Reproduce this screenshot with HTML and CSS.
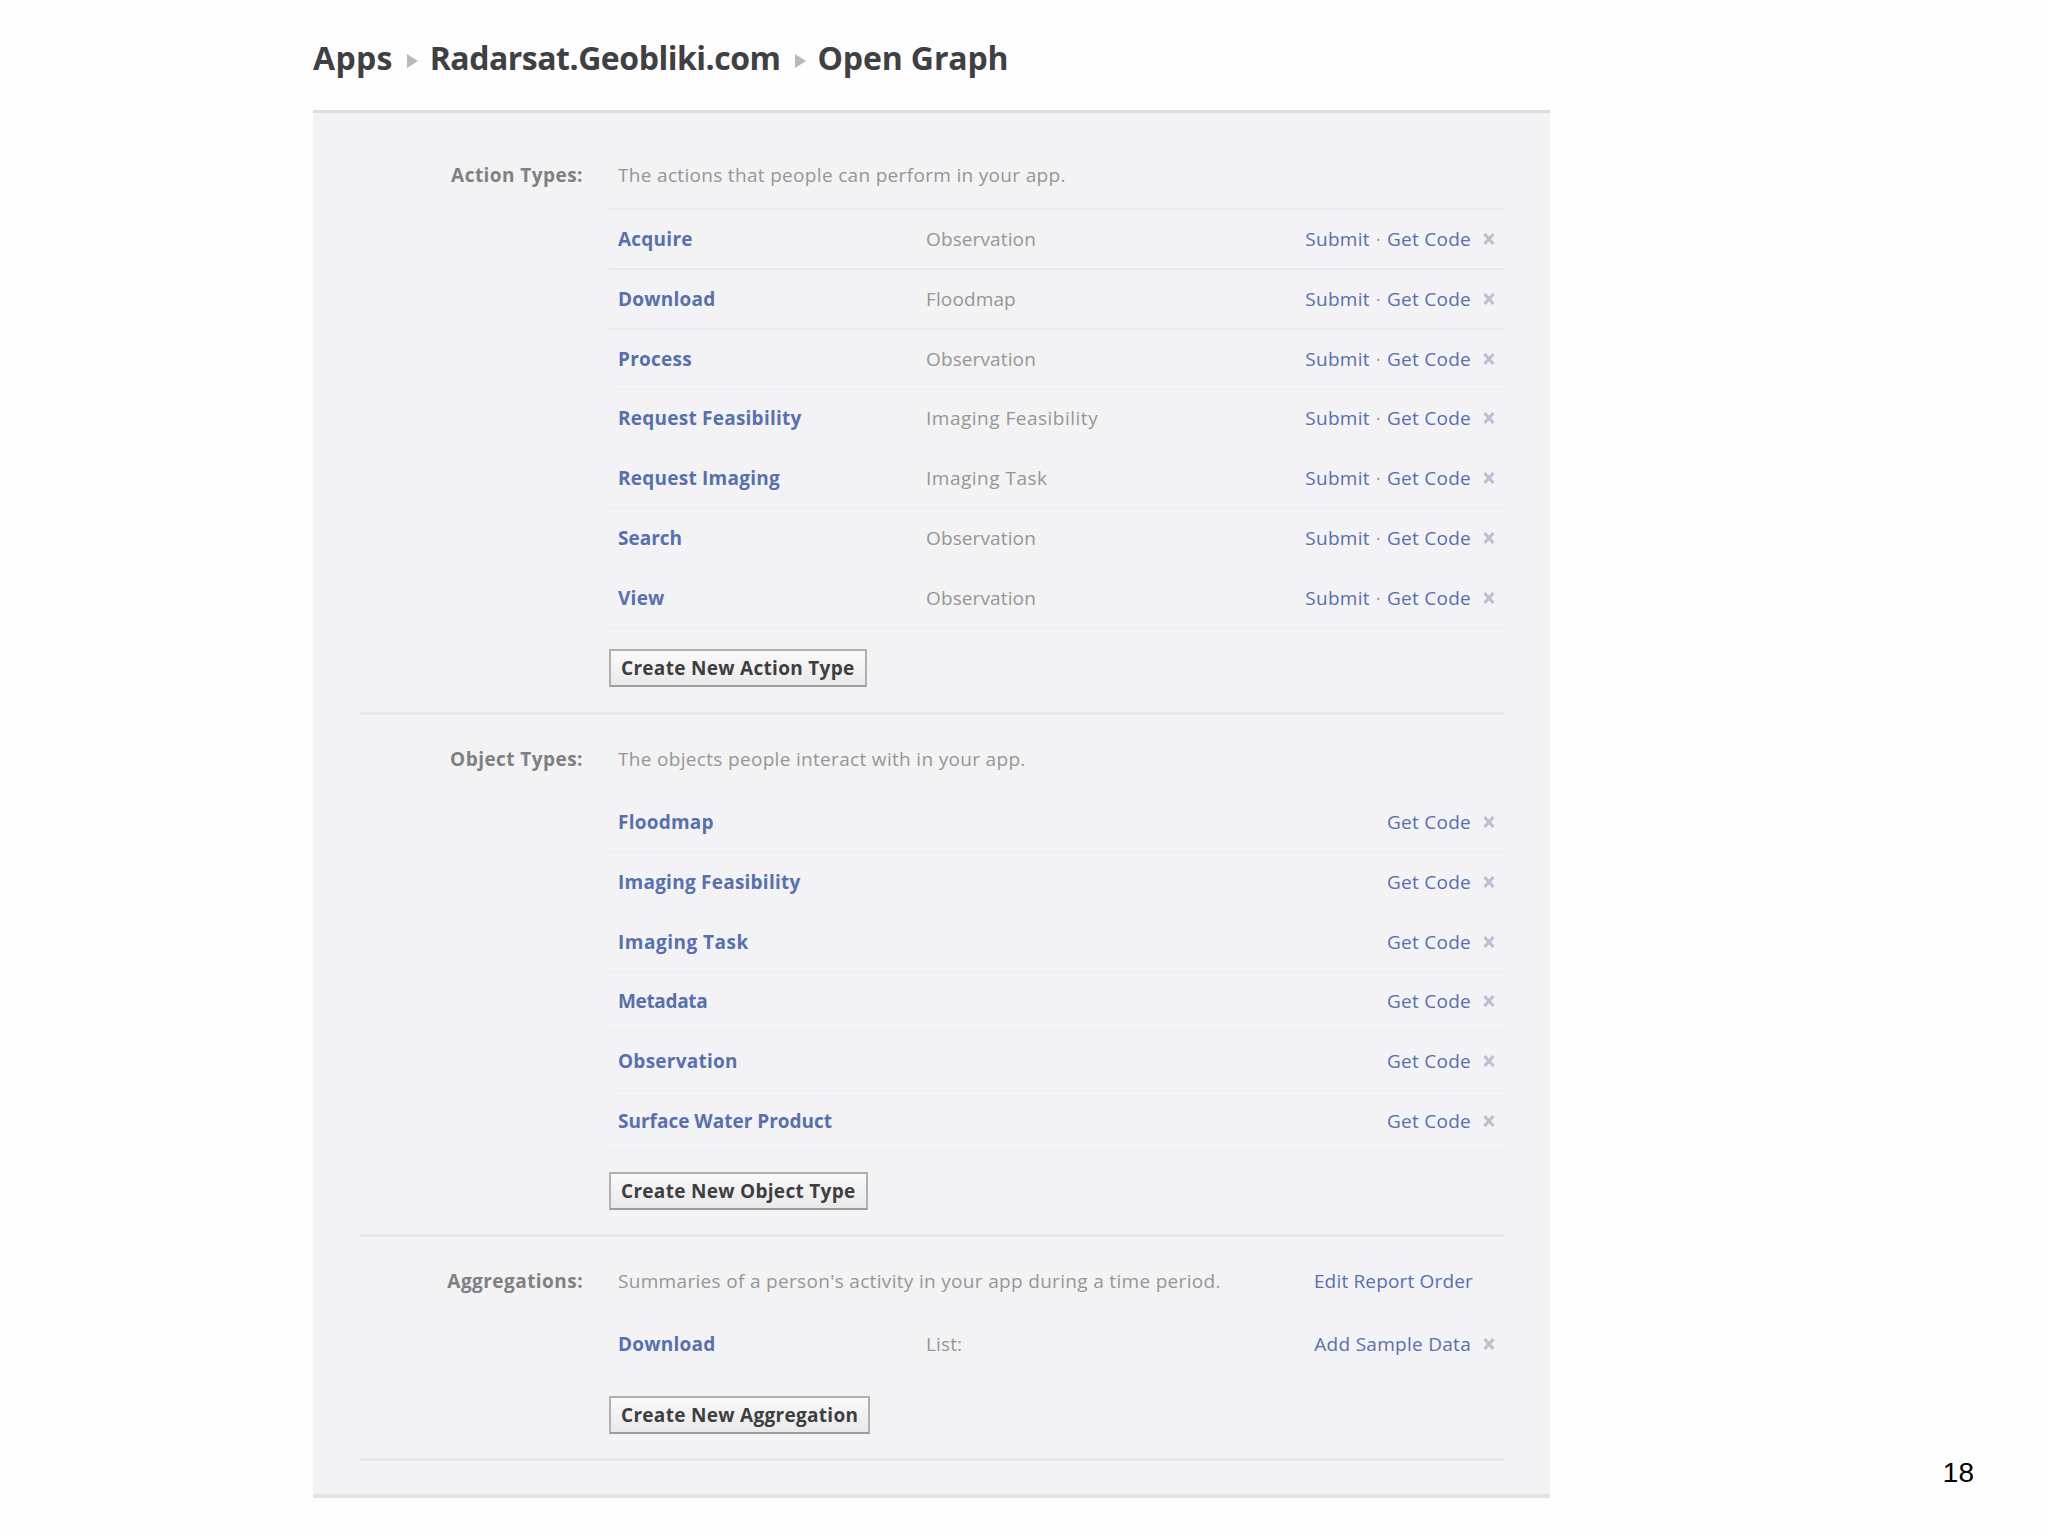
FILE: index.html
```html
<!DOCTYPE html>
<html lang="en">
<head>
  <meta charset="UTF-8" />
  <title>Open Graph</title>
  <link rel="stylesheet" href="styles.css">
</head>
<body>
  <svg class="defs" width="0" height="0">
    <symbol id="close" viewBox="0 0 12 12">
      <path d="M1.5 1 L10.5 11 M10.5 1 L1.5 11" />
    </symbol>
  </svg>

  <main>
    <h1 class="breadcrumb">
      <span class="crumb apps">Apps</span>
      <i class="arrow"></i>
      <span class="crumb site">Radarsat.Geobliki.com</span>
      <i class="arrow"></i>
      <span class="crumb page">Open Graph</span>
    </h1>

    <div class="panel">
      <section class="actions">
        <h2>Action Types:</h2>
        <div class="content">
          <div class="desc"><span>The actions that people can perform in your app.</span></div>
          <div class="row"><a class="name">Acquire</a><span class="object">Observation</span><span class="links"><a>Submit</a><b>·</b><a>Get Code</a></span><svg class="close"><use href="#close" /></svg></div>
          <div class="row"><a class="name">Download</a><span class="object">Floodmap</span><span class="links"><a>Submit</a><b>·</b><a>Get Code</a></span><svg class="close"><use href="#close" /></svg></div>
          <div class="row"><a class="name">Process</a><span class="object">Observation</span><span class="links"><a>Submit</a><b>·</b><a>Get Code</a></span><svg class="close"><use href="#close" /></svg></div>
          <div class="row faint"><a class="name">Request Feasibility</a><span class="object wide">Imaging Feasibility</span><span class="links"><a>Submit</a><b>·</b><a>Get Code</a></span><svg class="close"><use href="#close" /></svg></div>
          <div class="row faint"><a class="name">Request Imaging</a><span class="object wide">Imaging Task</span><span class="links"><a>Submit</a><b>·</b><a>Get Code</a></span><svg class="close"><use href="#close" /></svg></div>
          <div class="row faint"><a class="name normal">Search</a><span class="object">Observation</span><span class="links"><a>Submit</a><b>·</b><a>Get Code</a></span><svg class="close"><use href="#close" /></svg></div>
          <div class="row faint"><a class="name">View</a><span class="object">Observation</span><span class="links"><a>Submit</a><b>·</b><a>Get Code</a></span><svg class="close"><use href="#close" /></svg></div>
          <div class="create"><button>Create New Action Type</button></div>
        </div>
      </section>

      <section class="objects">
        <h2>Object Types:</h2>
        <div class="content">
          <div class="desc"><span>The objects people interact with in your app.</span></div>
          <div class="row faint"><a class="name">Floodmap</a><span class="links"><a>Get Code</a></span><svg class="close"><use href="#close" /></svg></div>
          <div class="row faint"><a class="name">Imaging Feasibility</a><span class="links"><a>Get Code</a></span><svg class="close"><use href="#close" /></svg></div>
          <div class="row faint"><a class="name wide">Imaging Task</a><span class="links"><a>Get Code</a></span><svg class="close"><use href="#close" /></svg></div>
          <div class="row faint"><a class="name tight">Metadata</a><span class="links"><a>Get Code</a></span><svg class="close"><use href="#close" /></svg></div>
          <div class="row faint"><a class="name">Observation</a><span class="links"><a>Get Code</a></span><svg class="close"><use href="#close" /></svg></div>
          <div class="row faint"><a class="name normal">Surface Water Product</a><span class="links"><a>Get Code</a></span><svg class="close"><use href="#close" /></svg></div>
          <div class="create"><button>Create New Object Type</button></div>
        </div>
      </section>

      <section class="aggregations">
        <h2>Aggregations:</h2>
        <div class="content">
          <div class="desc"><span>Summaries of a person's activity in your app during a time period.</span><a class="edit">Edit Report Order</a></div>
          <div class="row faint"><a class="name">Download</a><span class="object">List:</span><span class="links"><a>Add Sample Data</a></span><svg class="close"><use href="#close" /></svg></div>
          <div class="create"><button>Create New Aggregation</button></div>
        </div>
      </section>
    </div>
  </main>

  <div class="page-number">18</div>
</body>
</html>
```
FILE: styles.css
```css
* { box-sizing: border-box; }

body {
  margin: 0;
  height: 1536px;
  display: flex;
  align-items: flex-end;
  background: #fefefe;
  font-family: "Open Sans", "Noto Sans", sans-serif;
  font-size: 19px;
  color: #969696;
  overflow: hidden;
}

.defs { display: none; }

main { width: 1237px; height: 1536px; margin-left: 313px; }

.breadcrumb {
  display: flex;
  align-items: center;
  height: 110px;
  margin: 0;
  padding-top: 4px;
  font-size: 32px;
  font-weight: 700;
  color: #3f4043;
}
.crumb { white-space: nowrap; }
.apps { letter-spacing: 0.3px; }
.site { letter-spacing: -0.48px; }
.page { letter-spacing: -0.13px; }
.arrow {
  margin: 7px 12px 0 14px;
  border-left: 11px solid #b8b8ba;
  border-top: 7px solid transparent;
  border-bottom: 7px solid transparent;
}

.panel {
  height: 1388px;
  padding: 20px 46px 0 47px;
  background: #f3f2f4;
  border-top: 3px solid #dcdbdd;
  border-bottom: 4px solid #e3e2e4;
}

section { display: flex; border-bottom: 3px solid #e8e7e9; }
.actions { height: 582px; }
.objects { height: 522px; }
.aggregations { height: 224px; }

h2 {
  width: 223px;
  height: 75px;
  margin: 0 26px 0 0;
  line-height: 88px;
  text-align: right;
  font-size: 19px;
  font-weight: 700;
  letter-spacing: 0.45px;
  color: #808083;
}

.content { flex: 1; }

.desc {
  display: flex;
  justify-content: space-between;
  height: 76px;
  padding: 0 31px 0 9px;
  line-height: 88px;
  letter-spacing: 0.32px;
  white-space: nowrap;
}
.actions h2, .actions .desc { height: 75px; line-height: 85px; }
.aggregations h2, .aggregations .desc { line-height: 89px; }

.row {
  display: flex;
  align-items: center;
  height: 59.85px;
  padding: 0 9px;
  border-top: 2px solid #e9e9eb;
}
.faint { border-top-color: #f0eff1; }

a { color: #5870ad; }
.edit { letter-spacing: 0.17px; }
.name { width: 308px; font-weight: 700; letter-spacing: 0.24px; }
.object { letter-spacing: 0.12px; }
.wide { letter-spacing: 0.5px; }
.normal { letter-spacing: 0; }
.tight { letter-spacing: -0.35px; }
.links { display: flex; margin-left: auto; letter-spacing: 0.28px; }
.links b { width: 17px; text-align: center; font-weight: 400; color: #999; }
.close { width: 12px; height: 12px; margin-left: 12px; fill: none; stroke: #b9c0d3; stroke-width: 3; }

.create { padding-top: 20px; border-top: 2px solid #f0eff1; }
.aggregations .create { padding-top: 21px; }

button {
  display: block;
  height: 38px;
  padding: 0 10px;
  font: 700 19px "Open Sans", "Noto Sans", sans-serif;
  letter-spacing: 0.3px;
  color: #3e3e40;
  background: linear-gradient(#fafafb, #e9e9eb);
  border: 2px solid #b0b0b2;
  border-bottom-color: #9c9c9f;
  white-space: nowrap;
}

.page-number {
  margin: 0 74px 46px auto;
  font: 28px/34px "Liberation Sans", Arial, sans-serif;
  color: #000;
}
```
